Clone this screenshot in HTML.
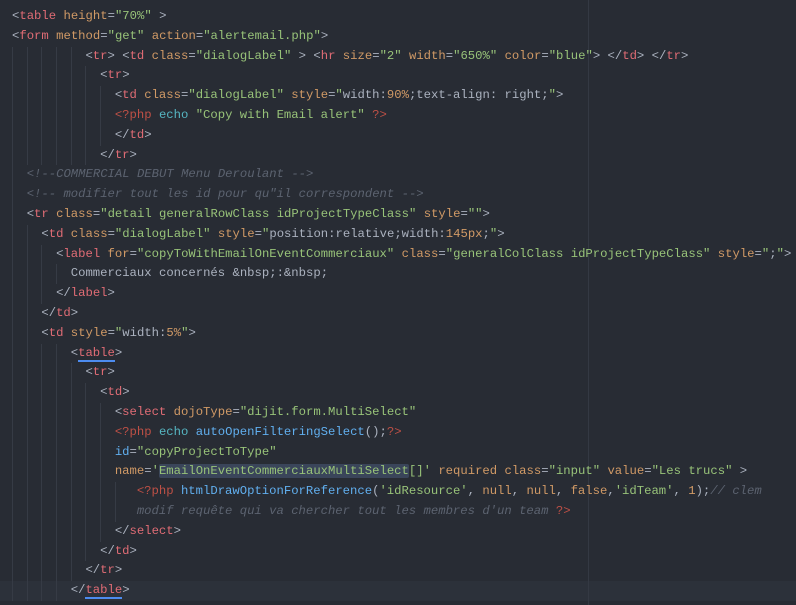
<!DOCTYPE html>
<html><head><meta charset="utf-8"><style>
html,body{margin:0;padding:0;background:#282c34;width:796px;height:605px;overflow:hidden}
#ed{position:absolute;left:12px;top:7px;font-family:"Liberation Mono",monospace;font-size:12.25px;color:#abb2bf}
.l{height:19.8px;line-height:19.8px;position:relative;white-space:pre}
.g{display:inline-block;width:14.7px;height:19.8px;vertical-align:top;box-shadow:inset 1px 0 0 #363b45}
.t{color:#e06c75}.a{color:#d19a66}.s{color:#98c379}.k{color:#be5046}.e{color:#56b6c2}.f{color:#61afef}
.c{color:#5c6370;font-style:italic}
.sel{background:#3a455a;border-radius:2px}
.u{border-bottom:2px solid #4d8cf0}
#wrap{position:absolute;left:588px;top:0;width:1px;height:605px;background:#343943}
#cur{position:absolute;left:0;top:581px;width:796px;height:20px;background:#2c313a}
</style></head><body>
<div id="cur"></div><div id="wrap"></div>
<div id="ed">
<div class="l">&lt;<span class="t">table</span> <span class="a">height</span>=<span class="s">"70%"</span> &gt;</div>
<div class="l">&lt;<span class="t">form</span> <span class="a">method</span>=<span class="s">"get"</span> <span class="a">action</span>=<span class="s">"alertemail.php"</span>&gt;</div>
<div class="l"><span class="g"></span><span class="g"></span><span class="g"></span><span class="g"></span><span class="g"></span>&lt;<span class="t">tr</span>&gt; &lt;<span class="t">td</span> <span class="a">class</span>=<span class="s">"dialogLabel"</span> &gt; &lt;<span class="t">hr</span> <span class="a">size</span>=<span class="s">"2"</span> <span class="a">width</span>=<span class="s">"650%"</span> <span class="a">color</span>=<span class="s">"blue"</span>&gt; &lt;/<span class="t">td</span>&gt; &lt;/<span class="t">tr</span>&gt;</div>
<div class="l"><span class="g"></span><span class="g"></span><span class="g"></span><span class="g"></span><span class="g"></span><span class="g"></span>&lt;<span class="t">tr</span>&gt;</div>
<div class="l"><span class="g"></span><span class="g"></span><span class="g"></span><span class="g"></span><span class="g"></span><span class="g"></span><span class="g"></span>&lt;<span class="t">td</span> <span class="a">class</span>=<span class="s">"dialogLabel"</span> <span class="a">style</span>=<span class="s">"</span>width:<span class="a">90%</span>;text-align: right;<span class="s">"</span>&gt;</div>
<div class="l"><span class="g"></span><span class="g"></span><span class="g"></span><span class="g"></span><span class="g"></span><span class="g"></span><span class="g"></span><span class="k">&lt;?php</span> <span class="e">echo</span> <span class="s">"Copy with Email alert"</span> <span class="k">?&gt;</span></div>
<div class="l"><span class="g"></span><span class="g"></span><span class="g"></span><span class="g"></span><span class="g"></span><span class="g"></span><span class="g"></span>&lt;/<span class="t">td</span>&gt;</div>
<div class="l"><span class="g"></span><span class="g"></span><span class="g"></span><span class="g"></span><span class="g"></span><span class="g"></span>&lt;/<span class="t">tr</span>&gt;</div>
<div class="l"><span class="g"></span><span class="c">&lt;!--COMMERCIAL DEBUT Menu Deroulant --&gt;</span></div>
<div class="l"><span class="g"></span><span class="c">&lt;!-- modifier tout les id pour qu"il correspondent --&gt;</span></div>
<div class="l"><span class="g"></span>&lt;<span class="t">tr</span> <span class="a">class</span>=<span class="s">"detail generalRowClass idProjectTypeClass"</span> <span class="a">style</span>=<span class="s">""</span>&gt;</div>
<div class="l"><span class="g"></span><span class="g"></span>&lt;<span class="t">td</span> <span class="a">class</span>=<span class="s">"dialogLabel"</span> <span class="a">style</span>=<span class="s">"</span>position:relative;width:<span class="a">145px</span>;<span class="s">"</span>&gt;</div>
<div class="l"><span class="g"></span><span class="g"></span><span class="g"></span>&lt;<span class="t">label</span> <span class="a">for</span>=<span class="s">"copyToWithEmailOnEventCommerciaux"</span> <span class="a">class</span>=<span class="s">"generalColClass idProjectTypeClass"</span> <span class="a">style</span>=<span class="s">"</span>;<span class="s">"</span>&gt;</div>
<div class="l"><span class="g"></span><span class="g"></span><span class="g"></span><span class="g"></span>Commerciaux concernés &amp;nbsp;:&amp;nbsp;</div>
<div class="l"><span class="g"></span><span class="g"></span><span class="g"></span>&lt;/<span class="t">label</span>&gt;</div>
<div class="l"><span class="g"></span><span class="g"></span>&lt;/<span class="t">td</span>&gt;</div>
<div class="l"><span class="g"></span><span class="g"></span>&lt;<span class="t">td</span> <span class="a">style</span>=<span class="s">"</span>width:<span class="a">5%</span><span class="s">"</span>&gt;</div>
<div class="l"><span class="g"></span><span class="g"></span><span class="g"></span><span class="g"></span>&lt;<span class="t u">table</span>&gt;</div>
<div class="l"><span class="g"></span><span class="g"></span><span class="g"></span><span class="g"></span><span class="g"></span>&lt;<span class="t">tr</span>&gt;</div>
<div class="l"><span class="g"></span><span class="g"></span><span class="g"></span><span class="g"></span><span class="g"></span><span class="g"></span>&lt;<span class="t">td</span>&gt;</div>
<div class="l"><span class="g"></span><span class="g"></span><span class="g"></span><span class="g"></span><span class="g"></span><span class="g"></span><span class="g"></span>&lt;<span class="t">select</span> <span class="a">dojoType</span>=<span class="s">"dijit.form.MultiSelect"</span></div>
<div class="l"><span class="g"></span><span class="g"></span><span class="g"></span><span class="g"></span><span class="g"></span><span class="g"></span><span class="g"></span><span class="k">&lt;?php</span> <span class="e">echo</span> <span class="f">autoOpenFilteringSelect</span>();<span class="k">?&gt;</span></div>
<div class="l"><span class="g"></span><span class="g"></span><span class="g"></span><span class="g"></span><span class="g"></span><span class="g"></span><span class="g"></span><span class="f">id</span>=<span class="s">"copyProjectToType"</span></div>
<div class="l"><span class="g"></span><span class="g"></span><span class="g"></span><span class="g"></span><span class="g"></span><span class="g"></span><span class="g"></span><span class="a">name</span>=<span class="s">'<span class="sel">EmailOnEventCommerciauxMultiSelect</span>[]'</span> <span class="a">required</span> <span class="a">class</span>=<span class="s">"input"</span> <span class="a">value</span>=<span class="s">"Les trucs"</span> &gt;</div>
<div class="l"><span class="g"></span><span class="g"></span><span class="g"></span><span class="g"></span><span class="g"></span><span class="g"></span><span class="g"></span><span class="g" style="width:22px"></span><span class="k">&lt;?php</span> <span class="f">htmlDrawOptionForReference</span>(<span class="s">'idResource'</span>, <span class="a">null</span>, <span class="a">null</span>, <span class="a">false</span>,<span class="s">'idTeam'</span>, <span class="a">1</span>);<span class="c">// clem</span></div>
<div class="l"><span class="g"></span><span class="g"></span><span class="g"></span><span class="g"></span><span class="g"></span><span class="g"></span><span class="g"></span><span class="g" style="width:22px"></span><span class="c">modif requête qui va chercher tout les membres d'un team</span> <span class="k">?&gt;</span></div>
<div class="l"><span class="g"></span><span class="g"></span><span class="g"></span><span class="g"></span><span class="g"></span><span class="g"></span><span class="g"></span>&lt;/<span class="t">select</span>&gt;</div>
<div class="l"><span class="g"></span><span class="g"></span><span class="g"></span><span class="g"></span><span class="g"></span><span class="g"></span>&lt;/<span class="t">td</span>&gt;</div>
<div class="l"><span class="g"></span><span class="g"></span><span class="g"></span><span class="g"></span><span class="g"></span>&lt;/<span class="t">tr</span>&gt;</div>
<div class="l"><span class="g"></span><span class="g"></span><span class="g"></span><span class="g"></span>&lt;/<span class="t u">table</span>&gt;</div>
</div>
</body></html>
